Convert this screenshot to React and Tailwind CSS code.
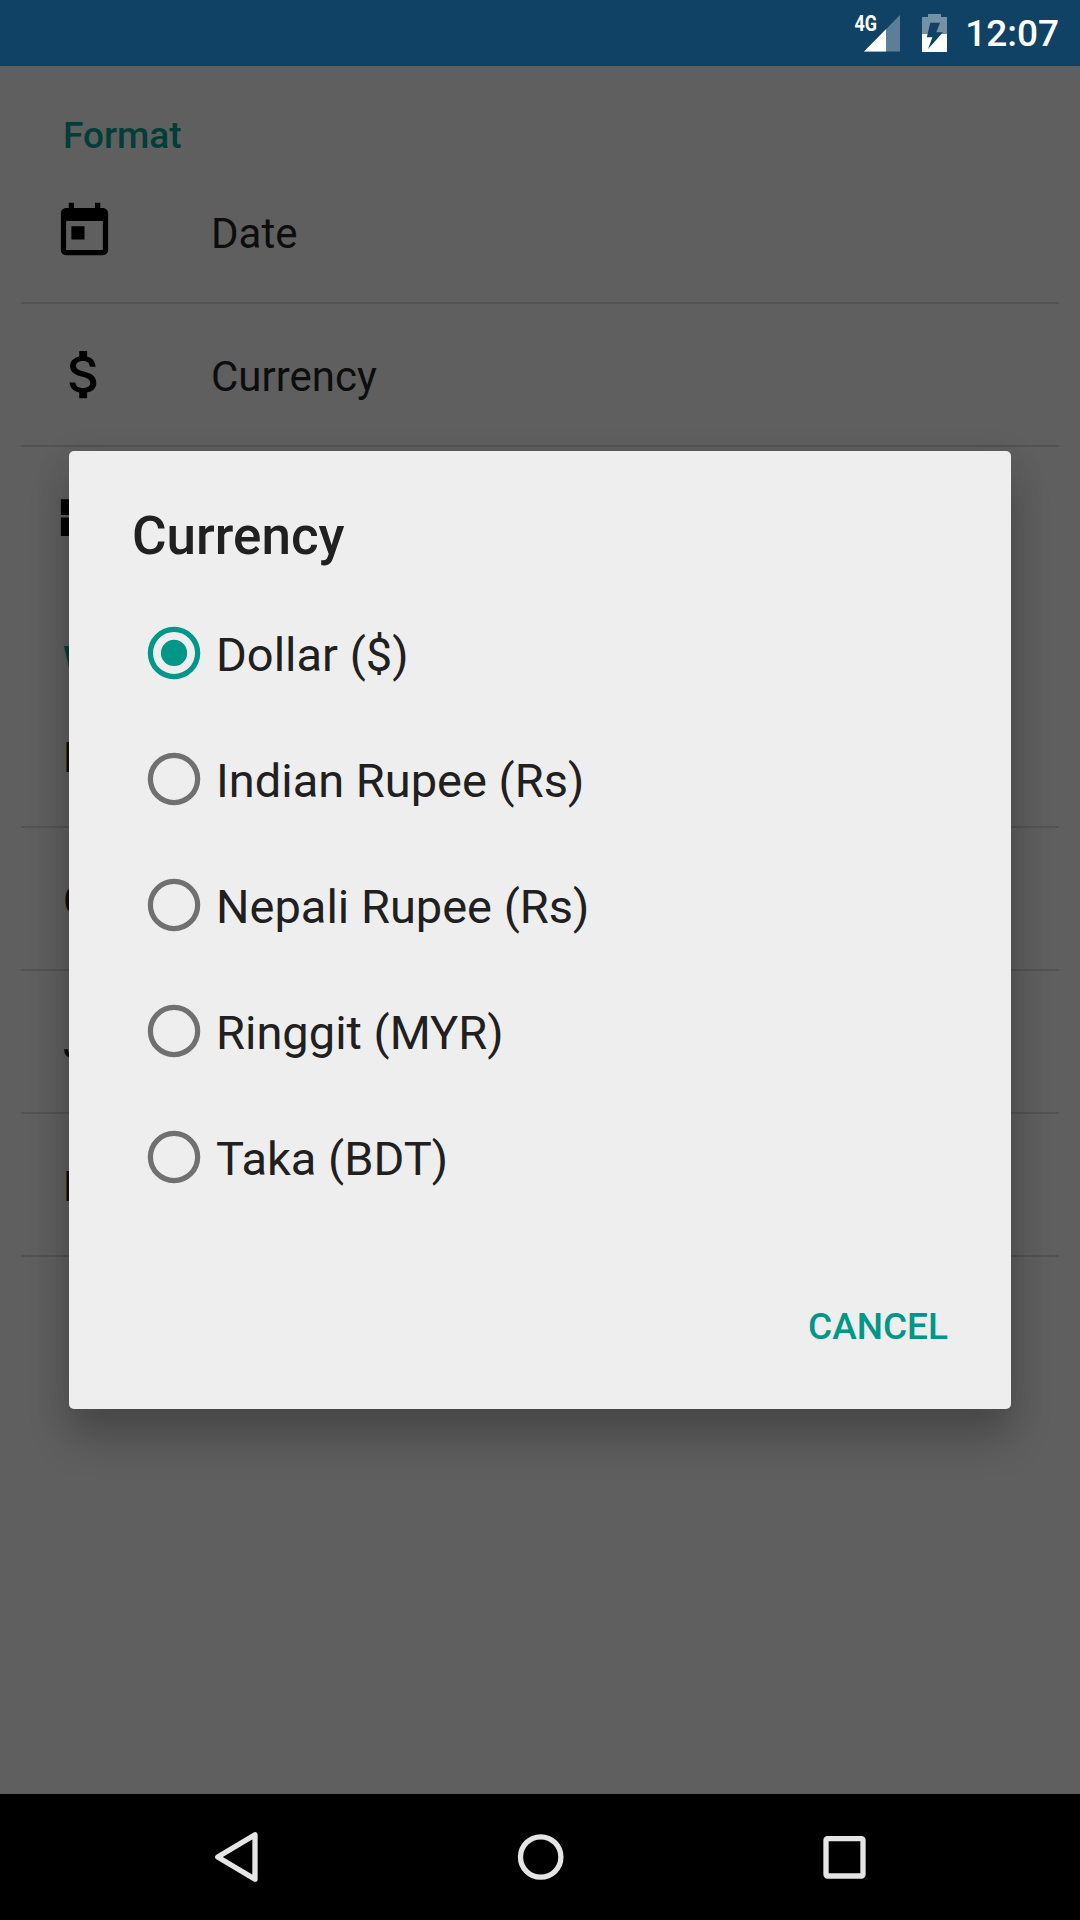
import React from "react";

const formatRows = [
  {
    label: "Date",
    path: "M19 3h-1V1h-2v2H8V1H6v2H5c-1.11 0-1.99.9-1.99 2L3 19c0 1.1.89 2 2 2h14c1.1 0 2-.9 2-2V5c0-1.1-.9-2-2-2zm0 16H5V8h14v11zM7 10h5v5H7z",
    divider: true,
  },
  {
    label: "Currency",
    path: "M11.8 10.9c-2.27-.59-3-1.2-3-2.15 0-1.09 1.01-1.85 2.7-1.85 1.78 0 2.44.85 2.5 2.1h2.21c-.07-1.72-1.12-3.3-3.21-3.81V3h-3v2.16c-1.94.42-3.5 1.68-3.5 3.61 0 2.31 1.91 3.46 4.7 4.13 2.5.6 3 1.48 3 2.41 0 .69-.49 1.79-2.7 1.79-2.06 0-2.87-.92-2.98-2.1h-2.2c.12 2.19 1.76 3.42 3.68 3.83V21h3v-2.15c1.95-.37 3.5-1.5 3.5-3.55 0-2.84-2.43-3.81-4.7-4.4z",
    divider: true,
  },
  {
    label: "",
    path: "M3 19h6v-7H3v7zm7 0h12v-7H10v7zM3 5v6h19V5H3z",
    divider: false,
  },
];

const plainRows = ["D", "C", "J", "D"];

const options = ["Dollar ($)", "Indian Rupee (Rs)", "Nepali Rupee (Rs)", "Ringgit (MYR)", "Taka (BDT)"];

function StatusBar() {
  return (
    <header className="flex h-[66px] shrink-0 items-center justify-end bg-[#104265] pr-[21px] text-white">
      <svg className="mr-[21px] h-[66px] w-[48px]" viewBox="853 0 48 66">
        <path d="M900 15V51.5H864z" fill="#fff" fillOpacity=".32" />
        <path d="M886 29.2V51.5H864z" fill="#fff" />
        <text x="854.6" y="31" fontSize="21.5" fontWeight="700" textLength="22.5" lengthAdjust="spacingAndGlyphs" fill="#fff">
          4G
        </text>
      </svg>
      <svg className="mr-[18px] h-[66px] w-[25px]" viewBox="922 0 25 66">
        <path d="M928 14h13v3h6v17h-25V17h6z" fill="#fff" fillOpacity=".42" />
        <path d="M922 34h25v18h-25z" fill="#fff" />
        <path d="M930.3 22.7H940L936.3 32.3H943L928 49l4.4-11.7h-5.6z" fill="#104265" />
      </svg>
      <span className="pt-[2px] text-[37px] leading-[64px] font-medium">12:07</span>
    </header>
  );
}

function SectionTitle({ children }) {
  return (
    <h2 className="h-[95px] pt-[48px] pl-[63px] text-[37px] leading-[43px] font-medium text-[#003e37]">{children}</h2>
  );
}

function Radio({ checked }) {
  return (
    <svg className={checked ? "h-[63px] w-[63px] text-[#009688]" : "h-[63px] w-[63px] text-[#707070]"} viewBox="0 0 24 24">
      <circle cx="12.2" cy="11.8" r="9" fill="none" stroke="currentColor" strokeWidth="2" />
      {checked && <circle cx="12.2" cy="11.8" r="5" fill="currentColor" />}
    </svg>
  );
}

function Settings() {
  return (
    <main className="flex-1 overflow-hidden bg-[#5f5f5f] text-[42px] text-[#0d0d0d]">
      <SectionTitle>Format</SectionTitle>
      {formatRows.map((row, i) => (
        <div key={i} className="flex h-[143px] flex-col px-[21px]">
          <div className="flex flex-1 items-center pl-8">
            <svg className="h-[63px] w-[63px] fill-black" viewBox="0 0 24 24">
              <path d={row.path} />
            </svg>
            <span className="ml-[95px] pt-[5px] leading-[50px]">{row.label}</span>
          </div>
          {row.divider && <div className="h-[2px] bg-[#535353]" />}
          {!row.divider && <div className="h-[2px]" />}
        </div>
      ))}
      <SectionTitle>W</SectionTitle>
      {plainRows.map((label, i) => (
        <div key={i} className="flex h-[143px] flex-col px-[21px]">
          <div className="flex flex-1 items-center pl-[42px]">
            <span className="pt-[5px] leading-[50px]">{label}</span>
          </div>
          <div className="h-[2px] bg-[#535353]" />
        </div>
      ))}
    </main>
  );
}

function CurrencyDialog() {
  return (
    <section
      role="dialog"
      className="absolute top-[451px] left-[69px] flex h-[958px] w-[942px] flex-col rounded-[5px] bg-[#eeeeee] px-[63px] text-[#202020] shadow-[0_30px_42px_rgba(0,0,0,0.2),0_8px_36px_rgba(0,0,0,0.1)]"
    >
      <h1 className="pt-[54px] text-[53px] leading-[62px] font-medium">Currency</h1>
      <div className="mt-[23px] flex flex-col">
        {options.map((option, i) => (
          <label key={option} className="flex h-[126px] items-center pl-[10px]">
            <Radio checked={i === 0} />
            <span className="ml-[11px] pt-[4px] text-[47px] leading-[56px]">{option}</span>
          </label>
        ))}
      </div>
      <button className="mt-[85px] self-end text-[37px] leading-[43px] font-medium text-[#009688]">CANCEL</button>
    </section>
  );
}

function NavigationBar() {
  return (
    <nav className="flex h-[126px] shrink-0 items-center justify-between bg-black px-[204px]">
      <svg className="h-[63px] w-[63px]" viewBox="204 1826 63 63">
        <path d="M217.7 1857L255 1834.8V1879.2z" fill="none" stroke="#e5e5e5" strokeWidth="5.3" strokeLinejoin="round" />
      </svg>
      <svg className="h-[63px] w-[63px]" viewBox="0 0 63 63">
        <circle cx="31.7" cy="31" r="20.2" fill="none" stroke="#e5e5e5" strokeWidth="5.3" />
      </svg>
      <svg className="h-[63px] w-[63px]" viewBox="813 1826 63 63">
        <rect x="826" y="1838.7" width="37" height="37.3" rx="1.5" fill="none" stroke="#e5e5e5" strokeWidth="5.3" />
      </svg>
    </nav>
  );
}

export default function App() {
  return (
    <div className="relative flex h-[1920px] w-[1080px] flex-col overflow-hidden font-['Roboto',sans-serif]">
      <StatusBar />
      <Settings />
      <NavigationBar />
      <CurrencyDialog />
    </div>
  );
}
